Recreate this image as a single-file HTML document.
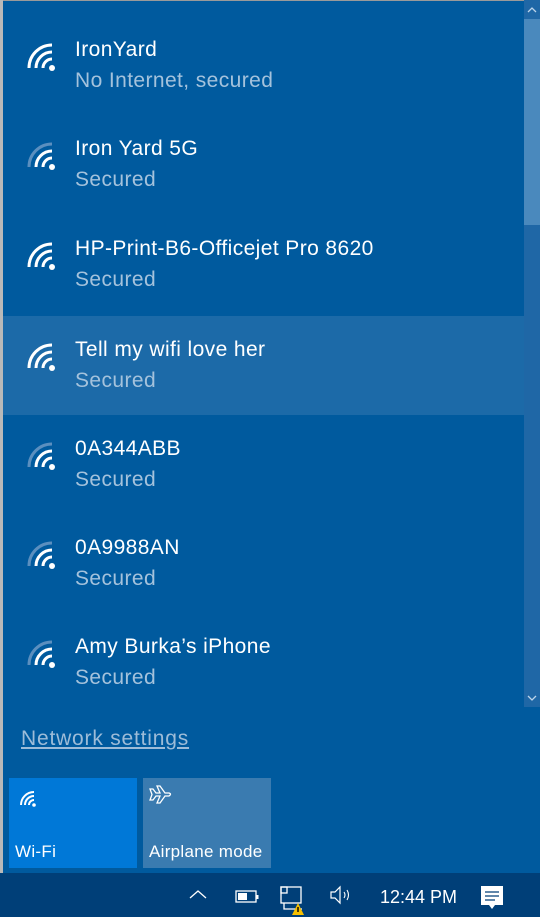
<!DOCTYPE html>
<html><head><meta charset="utf-8"><style>
*{margin:0;padding:0;box-sizing:border-box}
body{width:540px;height:917px;overflow:hidden;background:#005a9e;font-family:"Liberation Sans",sans-serif;position:relative;color:#fff}
.edge{position:absolute;left:0;top:0;width:3px;height:873px;background:#b9b9b9}
.topline{position:absolute;left:0;top:0;width:540px;height:1px;background:#9a9a9a}
.row{position:absolute;left:3px;width:521px;height:99px}
.row.h{background:#1c6aa8}
.row svg{position:absolute;left:21px;top:24px}
.t{position:absolute;left:72px;top:22px;font-size:21px;letter-spacing:0.4px;white-space:nowrap}
.s{position:absolute;left:72px;top:53px;font-size:21px;letter-spacing:0.4px;color:#a4c2dc;white-space:nowrap}
.sb{position:absolute;left:524px;top:0;width:16px;height:707px;background:#1f67a6}
.thumb{position:absolute;left:524px;top:19px;width:16px;height:206px;background:#4a89bd}
.ns{position:absolute;left:21px;top:727px;font-size:21px;letter-spacing:0.8px;color:#9dbcd8;text-decoration:underline}
.tile{position:absolute;top:778px;width:128px;height:90px}
.tile span{position:absolute;left:6px;bottom:6px;font-size:17px;letter-spacing:0.3px}
.tb{position:absolute;left:0;top:873px;width:540px;height:44px;background:#003f78}
</style></head><body>
<div class="topline"></div>
<div class="sb"></div><div class="thumb"></div>
<svg style="position:absolute;left:524px;top:0" width="16" height="19"><path d="M4 12 L8 8 L12 12" stroke="#bcd4ea" stroke-width="1.3" fill="none"/></svg>
<svg style="position:absolute;left:524px;top:690px" width="16" height="17"><path d="M4 6 L8 10 L12 6" stroke="#bcd4ea" stroke-width="1.3" fill="none"/></svg>

<div class="row" style="top:16px"><svg width="34" height="34"><g fill="none" stroke="#fff" stroke-width="3"><path d="M19 28 A9 9 0 0 1 28 19"/><path d="M12 28 A16 16 0 0 1 28 12"/><path d="M5 28 A23 23 0 0 1 28 5"/></g><circle cx="28" cy="28" r="3" fill="#fff"/></svg><div class="t">IronYard</div><div class="s">No Internet, secured</div></div>
<div class="row" style="top:115px"><svg width="34" height="34"><g fill="none" stroke-width="3"><path d="M19 28 A9 9 0 0 1 28 19" stroke="#fff"/><path d="M12 28 A16 16 0 0 1 28 12" stroke="#fff"/><path d="M5 28 A23 23 0 0 1 28 5" stroke="#5b8fbf"/></g><circle cx="28" cy="28" r="3" fill="#fff"/></svg><div class="t">Iron Yard 5G</div><div class="s">Secured</div></div>
<div class="row" style="top:215px"><svg width="34" height="34"><g fill="none" stroke="#fff" stroke-width="3"><path d="M19 28 A9 9 0 0 1 28 19"/><path d="M12 28 A16 16 0 0 1 28 12"/><path d="M5 28 A23 23 0 0 1 28 5"/></g><circle cx="28" cy="28" r="3" fill="#fff"/></svg><div class="t">HP-Print-B6-Officejet Pro 8620</div><div class="s">Secured</div></div>
<div class="row h" style="top:316px"><svg width="34" height="34"><g fill="none" stroke="#fff" stroke-width="3"><path d="M19 28 A9 9 0 0 1 28 19"/><path d="M12 28 A16 16 0 0 1 28 12"/><path d="M5 28 A23 23 0 0 1 28 5"/></g><circle cx="28" cy="28" r="3" fill="#fff"/></svg><div class="t">Tell my wifi love her</div><div class="s">Secured</div></div>
<div class="row" style="top:415px"><svg width="34" height="34"><g fill="none" stroke-width="3"><path d="M19 28 A9 9 0 0 1 28 19" stroke="#fff"/><path d="M12 28 A16 16 0 0 1 28 12" stroke="#fff"/><path d="M5 28 A23 23 0 0 1 28 5" stroke="#5b8fbf"/></g><circle cx="28" cy="28" r="3" fill="#fff"/></svg><div class="t">0A344ABB</div><div class="s">Secured</div></div>
<div class="row" style="top:514px"><svg width="34" height="34"><g fill="none" stroke-width="3"><path d="M19 28 A9 9 0 0 1 28 19" stroke="#fff"/><path d="M12 28 A16 16 0 0 1 28 12" stroke="#fff"/><path d="M5 28 A23 23 0 0 1 28 5" stroke="#5b8fbf"/></g><circle cx="28" cy="28" r="3" fill="#fff"/></svg><div class="t">0A9988AN</div><div class="s">Secured</div></div>
<div class="row" style="top:613px"><svg width="34" height="34"><g fill="none" stroke-width="3"><path d="M19 28 A9 9 0 0 1 28 19" stroke="#fff"/><path d="M12 28 A16 16 0 0 1 28 12" stroke="#fff"/><path d="M5 28 A23 23 0 0 1 28 5" stroke="#5b8fbf"/></g><circle cx="28" cy="28" r="3" fill="#fff"/></svg><div class="t">Amy Burka’s iPhone</div><div class="s">Secured</div></div>

<div class="ns">Network settings</div>
<div class="tile" style="left:9px;background:#0078d7"><svg style="position:absolute;left:8px;top:10px" width="20" height="20"><g fill="none" stroke="#fff" stroke-width="2"><path d="M12 17 A5 5 0 0 1 17 12"/><path d="M8 17 A9 9 0 0 1 17 8"/><path d="M4 17 A13 13 0 0 1 17 4"/></g><circle cx="17" cy="17" r="1.8" fill="#fff"/></svg><span>Wi-Fi</span></div>
<div class="tile" style="left:143px;background:#3a7bb0"><svg style="position:absolute;left:5px;top:6px" width="26" height="24"><path d="M2 5 L5 5 L8 9 L12 9 L9 2 L12 2 L17 9 L21 9 Q24 10 21 12 L17 12 L12 19 L9 19 L12 12 L8 12 L5 16 L2 16 L4 10.5 Z" fill="none" stroke="#fff" stroke-width="1.3"/></svg><span>Airplane mode</span></div>

<div class="tb">
<svg style="position:absolute;left:188px;top:15px" width="20" height="12"><path d="M2 10 L10 3 L18 10" stroke="#fff" stroke-width="1.3" fill="none"/></svg>
<svg style="position:absolute;left:235px;top:17px" width="24" height="14"><rect x="1" y="1" width="20" height="11" stroke="#fff" fill="none" stroke-width="1.3"/><rect x="3" y="3" width="9" height="7" fill="#fff"/><rect x="21.5" y="5" width="2" height="4" fill="#fff"/></svg>
<svg style="position:absolute;left:272px;top:12px" width="36" height="32"><g fill="none" stroke="#fff" stroke-width="1.3"><rect x="9" y="2" width="20" height="16"/><rect x="9" y="2" width="6" height="6"/><path d="M12 18 V24 H30"/></g><path d="M26 18 L32 30 H20 Z" fill="#f6c000"/><rect x="25.3" y="22" width="1.4" height="5" fill="#000"/></svg>
<svg style="position:absolute;left:330px;top:12px" width="24" height="20"><path d="M1 7 H5 L10 2 V18 L5 13 H1 Z" fill="none" stroke="#fff" stroke-width="1.2"/><path d="M14 7 Q16 10 14 13 M17 5 Q20 10 17 15" fill="none" stroke="#fff" stroke-width="1.1"/></svg>
<div style="position:absolute;left:380px;top:14px;font-size:18px">12:44 PM</div>
<svg style="position:absolute;left:480px;top:12px" width="26" height="26"><path d="M1 1 H23 V20 H15 L12 24 L9 20 H1 Z" fill="#fff"/><path d="M5 7 H19 M5 11 H19 M5 15 H15" stroke="#003f78" stroke-width="1.2"/></svg>
</div>
<div class="edge"></div>
</body></html>
